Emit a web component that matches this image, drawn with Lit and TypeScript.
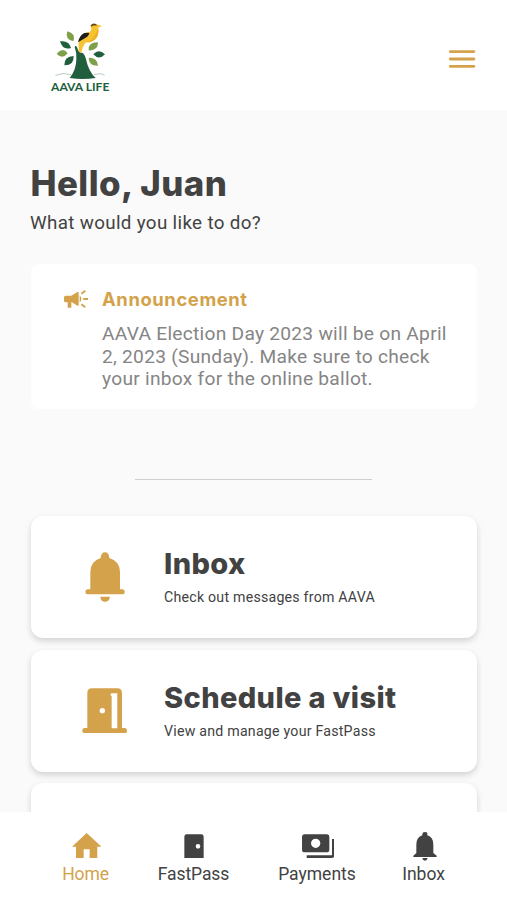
import { LitElement, html, css, svg } from "lit";
import { customElement, property } from "lit/decorators.js";

const logo = html`<svg class="logo" viewBox="0 0 330 300" width="110" height="100">
  <g fill="none" stroke="#a9c0ae" stroke-width="2.5">
    <path d="M76 196 Q98 186 124 194" /><path d="M192 194 Q214 188 224 196" />
  </g>
  <path fill="#205f3d" d="M134 110 Q139 104 142 114 Q146 130 156 128 Q163 130 167 144 Q176 186 197 204 Q158 210 119 204 Q139 180 139 148 Q140 126 134 110Z" />
  <g fill="#7fa04b">
    <path d="M112 64 Q138 70 130 94 Q104 88 112 64Z" />
    <path d="M80 131 Q98 110 113 130 Q97 150 80 131Z" />
    <path d="M176 121 Q174 96 204 97 Q204 123 176 121Z" />
    <path d="M176 143 Q202 142 204 167 Q176 168 176 143Z" />
  </g>
  <g fill="#205f3d">
    <path d="M90 94 Q117 90 123 114 Q98 122 90 94Z" />
    <path d="M103 166 Q102 139 131 138 Q132 167 103 166Z" />
    <path d="M190 133 Q206 114 225 133 Q207 152 190 133Z" />
  </g>
  <path fill="#f7c32e" d="M182 50 Q187 40 199 43 L216 48 L204 53 Q208 70 199 84 Q188 98 166 98 Q158 108 154 128 Q144 126 146 116 L146 94 Q162 68 178 66 Q187 60 182 50Z" />
  <path fill="#eeb02a" d="M204 53 Q208 70 199 84 Q190 95 174 98 Q196 82 204 53Z" />
  <path fill="#1d1d1b" d="M144 97 Q148 76 163 69 Q174 68 178 69 Q176 80 162 86Z" />
  <path fill="#6b4a16" d="M182 46 Q188 38 198 42 L201 47 Q190 45 183 50Z" />
  <text class="brand" x="63" y="242" textLength="175" lengthAdjust="spacingAndGlyphs">AAVA LIFE</text>
</svg>`;

const icons: Record<string, unknown> = {
  menu: html`<svg viewBox="0 0 28 20" width="28" height="20" fill="none" stroke="#d3a24b" stroke-width="2.8" stroke-linecap="round"><path d="M2.3 2.6H25.9M2.3 10H25.9M2.3 17.4H25.9" /></svg>`,
  horn: html`<svg viewBox="0 0 78 60" width="26" height="20" fill="#d3a24b"><path d="M3 25Q3 20 8 20H25L43 9H47V50H43L27 40H25V56H14V40H8Q3 40 3 35ZM50 19Q60 30 50 41Z" /><path d="M55 14L67 5M61 30H75M55 46L67 55" stroke="#d3a24b" stroke-width="5.5" /></svg>`,
  bell: html`<svg viewBox="0 0 120 150" width="40" height="50" fill="#d3a24b"><path d="M16 112V60Q16 28 47 18Q48 1 60 1T73 18Q105 28 105 60V112H112Q119 112 119 120T112 127H8Q1 127 1 120T8 112ZM46 134H75Q73 149 60 149T46 134Z" /></svg>`,
  door: html`<svg viewBox="0 0 136 136" width="45.3" height="45.3" fill="#d3a24b"><path fill-rule="evenodd" d="M16 120V15Q16 1 30 1H106Q120 1 120 15V120H128Q135 120 135 128T128 136H8Q1 136 1 128T8 120ZM86 18V23H89V121H106V16H90Q86 16 86 18ZM61 60A8 8 0 1 0 61 76A8 8 0 1 0 61 60Z" /></svg>`,
  home: svg`<svg viewBox="0 0 88 76" width="29.3" height="25.3" fill="currentColor"><path d="M44 0L88 41H76V76H53V49H35V76H12V41H0Z"/></svg>`,
  pass: svg`<svg viewBox="0 0 60 76" width="20" height="25.3" fill="currentColor"><path fill-rule="evenodd" d="M8 4H52Q59 4 59 11V76H1V11Q1 4 8 4ZM42 33A7 7 0 1 0 42 47A7 7 0 1 0 42 33Z"/></svg>`,
  cash: svg`<svg viewBox="0 0 98 76" width="32.7" height="25.3" fill="currentColor"><path fill-rule="evenodd" d="M8 4H74Q82 4 82 12V50Q82 58 74 58H8Q0 58 0 50V12Q0 4 8 4ZM41 17A14 14 0 1 0 41 45A14 14 0 1 0 41 17Z"/><path d="M94 18V66Q94 71 89 71H14" fill="none" stroke="currentColor" stroke-width="8"/></svg>`,
  ring: svg`<svg viewBox="0 0 72 86" width="24" height="28.7" fill="currentColor"><path d="M10 63V38Q10 15 28 10V6Q28 0 36 0T43 6V10Q61 15 61 38V63L71 71V75H1V71ZM28 78H44Q43 86 36 86T28 78Z"/></svg>`,
};

@customElement("action-card")
class ActionCard extends LitElement {
  @property() icon = "";
  @property() heading = "";
  @property() note = "";
  static styles = css`
    :host { display: grid; grid-template-columns: 147px 1fr; box-sizing: border-box; height: 122px; border-radius: 12px; background: #fff; box-shadow: 0 3px 6px rgba(0, 0, 0, .16); color: #424242; }
    .icon { display: flex; align-items: center; justify-content: center; }
    .copy { padding-top: 31px; margin-left: -14px; white-space: nowrap; }
    .heading { font: 800 29px/34px Inter, sans-serif; letter-spacing: .37px; }
    .note { margin-top: 7px; font: 400 14.2px/18px Roboto, sans-serif; letter-spacing: .22px; }
  `;
  render() {
    return html`<div class="icon">${icons[this.icon]}</div>
      <div class="copy"><div class="heading">${this.heading}</div><div class="note">${this.note}</div></div>`;
  }
}

@customElement("app-root")
class AppRoot extends LitElement {
  static styles = css`
    :host { display: flex; flex-direction: column; height: 900px; overflow: hidden; background: #fafafa; color: #424242; font-family: Roboto, sans-serif; }
    svg { display: block; }
    header { display: flex; justify-content: space-between; flex: none; height: 110px; box-sizing: border-box; padding: 10px 31px 0 30px; background: #fff; }
    .brand { font: 700 34.5px Lato, sans-serif; fill: #205f3d; }
    .menu { margin-top: 39px; }
    main { flex: 1; min-height: 0; overflow: hidden; padding: 52px 30px 0 31px; }
    h1 { margin: 0 0 7px -.5px; font: 800 34.8px/42px Inter, sans-serif; letter-spacing: .45px; }
    .ask { margin: 0 0 29px -1px; font-size: 18.8px; line-height: 24px; letter-spacing: .34px; }
    .news { box-sizing: border-box; height: 145px; display: flex; padding: 23px 0 0 32px; background: #fff; border-radius: 8px; }
    .horn { width: 39px; padding-top: 2px; }
    .news h2 { margin: 0 0 12px; font: 700 18.4px/24px Inter, sans-serif; letter-spacing: .6px; color: #d3a24b; }
    .news p { margin: 0; font-size: 19.2px; line-height: 22.5px; letter-spacing: .25px; color: #858585; white-space: nowrap; }
    .rule { width: 237px; height: 1px; margin: 70px 0 36px 104px; background: #cfcfcf; }
    .cards { display: grid; gap: 11.5px; }
    nav { flex: none; display: flex; box-sizing: border-box; height: 88px; padding: 20px 0 0 63px; background: #fff; font-size: 17.5px; line-height: 22px; }
    .tab { display: flex; flex-direction: column; align-items: center; white-space: nowrap; }
    .tab .pic { height: 31px; display: flex; align-items: flex-start; box-sizing: border-box; }
    .home { width: 45px; color: #d3a24b; letter-spacing: -.1px; }
    .pass { width: 71px; margin-left: 50px; letter-spacing: -.1px; }
    .cash { width: 78px; margin-left: 49px; }
    .ring { width: 43px; margin-left: 46px; }
    .home .pic { padding: 1px 0 0 2px; }
    .pass .pic { padding-top: 1px; }
    .cash .pic { padding: 1px 0 0 2px; }
    .ring .pic { padding-left: 2px; }
  `;
  render() {
    const tabs = [["home", "Home"], ["pass", "FastPass"], ["cash", "Payments"], ["ring", "Inbox"]];
    return html`
      <header>${logo}<div class="menu">${icons.menu}</div></header>
      <main>
        <h1>Hello, Juan</h1>
        <div class="ask">What would you like to do?</div>
        <section class="news">
          <div class="horn">${icons.horn}</div>
          <div>
            <h2>Announcement</h2>
            <p>AAVA Election Day 2023 will be on April</p>
            <p>2, 2023 (Sunday). Make sure to check</p>
            <p>your inbox for the online ballot.</p>
          </div>
        </section>
        <div class="rule"></div>
        <div class="cards">
          <action-card icon="bell" heading="Inbox" note="Check out messages from AAVA"></action-card>
          <action-card icon="door" heading="Schedule a visit" note="View and manage your FastPass"></action-card>
          <action-card></action-card>
        </div>
      </main>
      <nav>${tabs.map(([id, label]) => html`<div class="tab ${id}"><div class="pic">${icons[id]}</div><span>${label}</span></div>`)}</nav>
    `;
  }
}
